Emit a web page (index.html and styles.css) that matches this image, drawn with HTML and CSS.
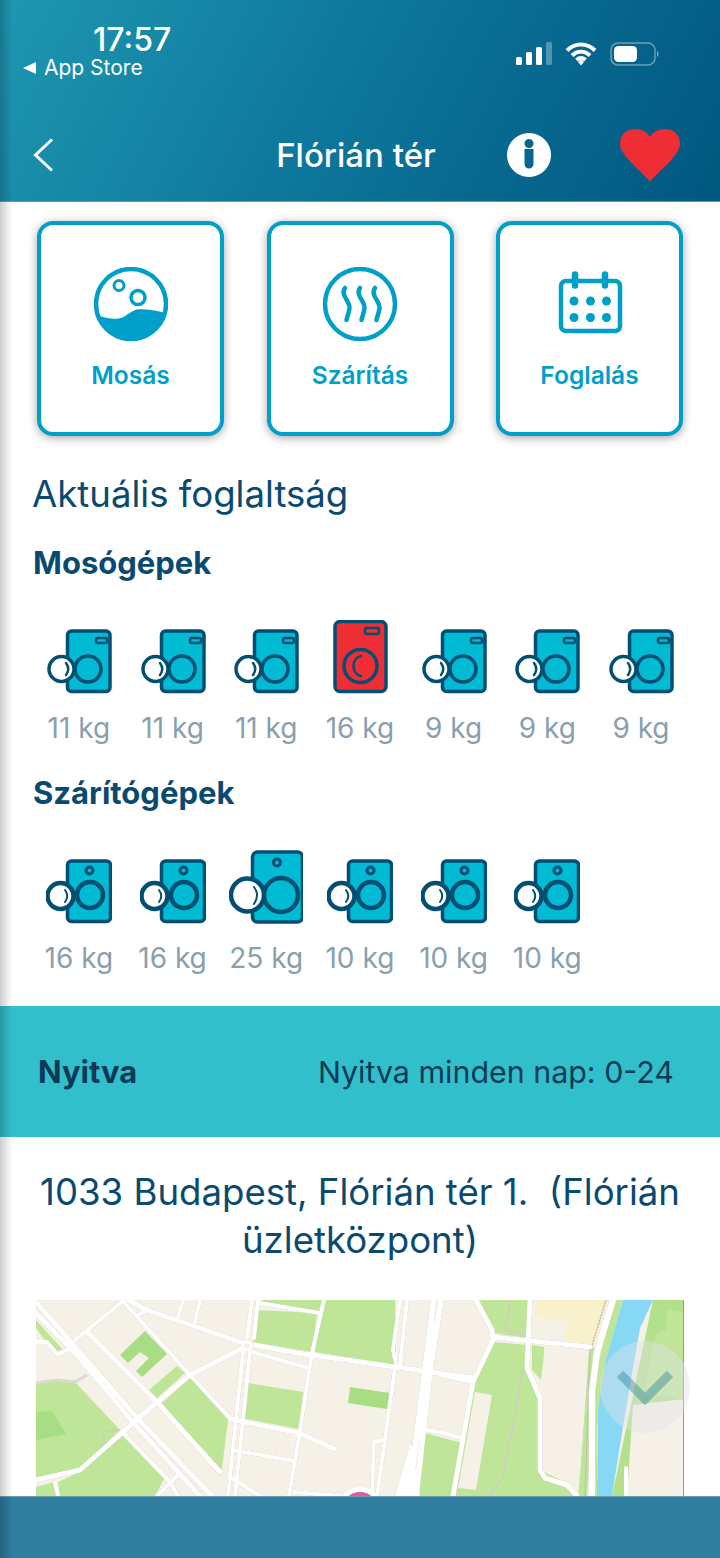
FILE: index.html
```html
<!DOCTYPE html>
<html lang="hu">
<head>
    <meta charset="UTF-8">
    <title>Flórián tér</title>
    <link rel="stylesheet" href="styles.css">
</head>
<body>
<svg class="defs" width="0" height="0">
    <symbol id="washer" viewBox="0 0 66 74">
        <rect x="21.5" y="11" width="42.5" height="60.5" rx="4" fill="#00bbd3" stroke="#034f73" stroke-width="3.5"/>
        <rect x="50" y="18" width="11" height="5" rx="2" fill="none" stroke="#034f73" stroke-width="2.5"/>
        <circle cx="42" cy="49" r="13" fill="#00bbd3" stroke="#034f73" stroke-width="3.5"/>
        <circle cx="15.5" cy="49" r="12.5" fill="#fff" stroke="#034f73" stroke-width="3.5"/>
        <path d="M20 43c3 4 3 8 0 12" fill="none" stroke="#034f73" stroke-width="2.5" stroke-linecap="round"/>
    </symbol>
    <symbol id="washer-busy" viewBox="0 0 66 74">
        <rect x="8" y="1.5" width="51" height="70" rx="5" fill="#ee2e34" stroke="#034f73" stroke-width="3.5"/>
        <rect x="38" y="8" width="14" height="6" rx="2" fill="none" stroke="#034f73" stroke-width="2.5"/>
        <circle cx="33.5" cy="46" r="16.5" fill="none" stroke="#034f73" stroke-width="3.5"/>
        <path d="M34 36c-10 2-10 18 0 20" fill="none" stroke="#034f73" stroke-width="2.5" stroke-linecap="round"/>
    </symbol>
    <symbol id="dryer" viewBox="0 0 66 74">
        <rect x="21.5" y="11" width="43" height="60.5" rx="4" fill="#00bbd3" stroke="#034f73" stroke-width="3.5"/>
        <circle cx="43.5" cy="20.5" r="3.5" fill="none" stroke="#034f73" stroke-width="3"/>
        <circle cx="44" cy="45" r="13" fill="#00bbd3" stroke="#034f73" stroke-width="4.5"/>
        <circle cx="14.5" cy="46" r="13" fill="#fff" stroke="#034f73" stroke-width="4.5"/>
        <path d="M19 40c3 4 3 8 0 12" fill="none" stroke="#034f73" stroke-width="2" stroke-linecap="round"/>
    </symbol>
    <symbol id="dryer-big" viewBox="0 0 74 74">
        <rect x="23.5" y="2" width="50" height="70" rx="5" fill="#00bbd3" stroke="#034f73" stroke-width="3.5"/>
        <circle cx="48" cy="12.5" r="3.5" fill="none" stroke="#034f73" stroke-width="3"/>
        <circle cx="52" cy="45" r="17" fill="#00bbd3" stroke="#034f73" stroke-width="4.5"/>
        <circle cx="18.5" cy="45" r="16.5" fill="#fff" stroke="#034f73" stroke-width="4.5"/>
        <path d="M25 37c4 5 4 11 0 17" fill="none" stroke="#034f73" stroke-width="2" stroke-linecap="round"/>
    </symbol>
</svg>

<div class="page">
    <header class="header">
        <div class="status">
            <div class="status-left">
                <div class="time">17:57</div>
                <div class="back-app"><span class="back-arrow"></span>App Store</div>
            </div>
            <div class="status-right">
                <svg width="36" height="24" viewBox="0 0 36 24"><rect x="0" y="15" width="6" height="8" rx="1.5" fill="#fff"/><rect x="10" y="10" width="6" height="13" rx="1.5" fill="#fff"/><rect x="20" y="5" width="6" height="18" rx="1.5" fill="#fff"/><rect x="30" y="0" width="6" height="23" rx="1.5" fill="#fff" opacity=".3"/></svg>
                <svg width="32" height="24" viewBox="0 0 32 24"><path d="M2 8.5c8-8 20-8 28 0M7 13.5c5.5-5 12.5-5 18 0M11.5 18c3-2.5 6-2.5 9 0" fill="none" stroke="#fff" stroke-width="4"/><path d="M13 20l3-2.500 3 2.500-3 3.500z" fill="#fff"/></svg>
                <svg width="50" height="24" viewBox="0 0 50 24"><rect x="1" y="1" width="44" height="22" rx="7" fill="none" stroke="#fff" stroke-width="1.5" opacity=".4"/><rect x="4" y="4" width="23" height="16" rx="4.5" fill="#fff"/><path d="M47 9c2 .5 2 5.500 0 6z" fill="#fff" opacity=".45"/></svg>
            </div>
        </div>
        <div class="nav">
            <svg class="nav-back" width="20" height="34" viewBox="0 0 20 34"><path d="M19 1.500L2.500 17 19 32.500" fill="none" stroke="#fff" stroke-width="3"/></svg>
            <div class="nav-title">Flórián tér</div>
            <svg class="nav-info" width="44" height="44" viewBox="0 0 44 44"><path fill="#fff" fill-rule="evenodd" d="M22 0a22 22 0 1 0 0.010 0zM22 6a4.500 4.500 0 1 0 0.010 0zM17.500 16v15a4.500 4.500 0 0 0 9 0V16z"/></svg>
            <svg class="nav-heart" width="60" height="53" viewBox="0 0 60 53"><path fill="#ee2e34" d="M30 53C26 46 0 27 0 15 0 5 7 0 15 0c7 0 12 3 15 8 3-5 8-8 15-8 8 0 15 5 15 15 0 12-26 31-30 38z"/></svg>
        </div>
    </header>

    <section class="cards">
        <div class="card">
            <svg width="74" height="74" viewBox="0 0 74 74">
                <circle cx="37" cy="37" r="35" fill="none" stroke="#009fca" stroke-width="4.5"/>
                <path fill="#009fca" d="M3 47.500C12 52 22 53 28.300 50.500 34 48 39 42.300 45 42.300c9 0 19 1.500 26 3.700C68 62 54 74 37 74 20 74 6 62 3 47.500z"/>
                <circle cx="25" cy="18.5" r="5" fill="none" stroke="#009fca" stroke-width="3"/>
                <circle cx="44" cy="30.5" r="7" fill="none" stroke="#009fca" stroke-width="3.5"/>
            </svg>
            <div class="card-label">Mosás</div>
        </div>
        <div class="card">
            <svg width="74" height="74" viewBox="0 0 74 74">
                <circle cx="37" cy="37" r="35" fill="none" stroke="#009fca" stroke-width="4.5"/>
                <g fill="none" stroke="#009fca" stroke-width="4.5" stroke-linecap="round">
                    <path d="M22 21C17 28 27 34 26.500 41 26 46 24 50 23.500 53"/>
                    <path d="M37 21C32 28 42 34 41.500 41 41 46 39 50 38.500 53"/>
                    <path d="M52 21C47 28 57 34 56.500 41 56 46 54 50 53.500 53"/>
                </g>
            </svg>
            <div class="card-label">Szárítás</div>
        </div>
        <div class="card">
            <svg width="74" height="74" viewBox="0 0 74 74">
                <rect x="8" y="14" width="59" height="50" rx="5" fill="none" stroke="#009fca" stroke-width="4.5"/>
                <path d="M22 7.500v11M52 7.500v11" stroke="#009fca" stroke-width="6.5" stroke-linecap="round"/>
                <g fill="#009fca">
                    <circle cx="21" cy="34" r="4.5"/><circle cx="37.5" cy="34" r="4.5"/><circle cx="53.5" cy="34" r="4.5"/>
                    <circle cx="21" cy="50.5" r="4.5"/><circle cx="37.5" cy="50.5" r="4.5"/><circle cx="53.5" cy="50.5" r="4.5"/>
                </g>
            </svg>
            <div class="card-label">Foglalás</div>
        </div>
    </section>

    <h1 class="title">Aktuális foglaltság</h1>

    <h2 class="subtitle">Mosógépek</h2>
    <div class="machines">
        <div class="machine"><svg width="66" height="74"><use href="#washer"/></svg><span>11 kg</span></div>
        <div class="machine"><svg width="66" height="74"><use href="#washer"/></svg><span>11 kg</span></div>
        <div class="machine"><svg width="66" height="74"><use href="#washer"/></svg><span>11 kg</span></div>
        <div class="machine"><svg width="66" height="74"><use href="#washer-busy"/></svg><span>16 kg</span></div>
        <div class="machine"><svg width="66" height="74"><use href="#washer"/></svg><span>9 kg</span></div>
        <div class="machine"><svg width="66" height="74"><use href="#washer"/></svg><span>9 kg</span></div>
        <div class="machine"><svg width="66" height="74"><use href="#washer"/></svg><span>9 kg</span></div>
    </div>

    <h2 class="subtitle subtitle-dry">Szárítógépek</h2>
    <div class="machines">
        <div class="machine"><svg width="66" height="74"><use href="#dryer"/></svg><span>16 kg</span></div>
        <div class="machine"><svg width="66" height="74"><use href="#dryer"/></svg><span>16 kg</span></div>
        <div class="machine"><svg width="74" height="74"><use href="#dryer-big"/></svg><span>25 kg</span></div>
        <div class="machine"><svg width="66" height="74"><use href="#dryer"/></svg><span>10 kg</span></div>
        <div class="machine"><svg width="66" height="74"><use href="#dryer"/></svg><span>10 kg</span></div>
        <div class="machine"><svg width="66" height="74"><use href="#dryer"/></svg><span>10 kg</span></div>
    </div>

    <div class="open-bar">
        <div class="open-label">Nyitva</div>
        <div class="open-hours">Nyitva minden nap: 0-24</div>
    </div>

    <div class="address">1033 Budapest, Flórián tér 1.&nbsp; (Flórián üzletközpont)</div>

    <div class="map">
        <svg width="648" height="196" viewBox="0 0 648 196">
            <rect width="648" height="196" fill="#f5f1e6"/>
            <!-- parks -->
            <g fill="#bfe599">
                <path d="M0 83L22 80 39 82 84 130 44 170 0 180z"/>
                <path d="M87 135L129 177 119 196H24L22 182 44 172z"/>
                <path d="M0 187L19 182 21 196H0z"/>
                <path d="M0 20L27 50 21 53 11 43 0 28z"/>
                <path d="M126 103L154 78 192 120 185 176 180 172z"/>
                <path d="M113 90L141 66 149 73 121 98z"/>
                <path d="M219 10L281 13 276 52 217 42z"/>
                <path d="M226 0H286L283 11 225 5z"/>
                <path d="M286 0H359L360 65 279 52z"/>
                <path d="M212 83L267 92 263 129 205 118z"/>
                <path d="M457 42L491 45 489 68 504 95V170L531 183 542 196H416L437 82z"/>
                <path d="M439 0H494L492 38 457 33z"/>
                <path d="M496 45L509 47 505 80 496 70z"/>
                <path d="M389 133L426 143 416 196H373z"/>
                <path d="M553 48H561L551 196H542L544 173z"/>
                <path d="M577 0H587L569 62 561 128V196H553L556 92z"/>
            </g>
            <path fill="#b3e08d" d="M617 0H648V196H576z"/>
            <path fill="#bfe599" d="M631 10L648 12V98L609 95 611 78 619 35 630 30z"/>
            <g fill="#a8dd83">
                <path d="M109 31L131 54 106 77 100 71 113 58 104 52 92 63 84 55z"/>
                <path d="M0 112L16 111 30 134 0 140z"/>
                <path d="M314 87L354 93 351 109 312 103z"/>
            </g>
            <!-- buildings and water -->
            <path fill="#f5f1e6" d="M439 92L456 95 440 190 422 188z"/>
            <path fill="#f5f1e6" d="M508 47L553 48 544 173 507 170z"/>
            <path fill="#f5f1e6" d="M597 105L648 99V196H591z"/>
            <path fill="#f8f1cc" d="M499 0H571L559 45 529 40 531 20 499 17z"/>
            <path fill="#87d8f5" d="M587 0H617L604 28 594 85 584 145 576 196H561L562 112 569 62z"/>
            <!-- thin paths -->
            <g fill="none" stroke="#cfcdc0" stroke-width="1.5">
                <path d="M475 0L469 30 484 33V37M487 70L467 177 454 196"/>
                <path d="M67 132L84 130M67 132L69 145"/>
                <path d="M570 0L554 52 549 196" stroke="#bdbbae" stroke-dasharray="2 1"/>
                <path d="M0 83L22 80 39 82 51 75" stroke="#ddd9cd" stroke-width="3"/>
                <path d="M20 30L101 125 165 195" stroke="#cfcfc4" stroke-width="3"/>
            </g>
            <!-- roads -->
            <g class="roads" fill="none" stroke="#fff" stroke-linejoin="round" stroke-linecap="round">
                <g stroke-width="5">
                    <path d="M0 2L101 118 176 196"/>
                    <path d="M0 13L39 53 97 122 164 196"/>
                    <path d="M52 33L121 102 184 172"/>
                    <path d="M92 0L111 10 207 43"/>
                    <path d="M219 45L254 52 359 67 437 78"/>
                    <path d="M207 48L154 75 121 102 97 123 44 170 0 180"/>
                    <path d="M194 119L263 133 299 149"/>
                    <path d="M440 0L456 30 457 40 437 82 417 196"/>
                    <path d="M457 37L554 47"/>
                    <path d="M494 0L491 68 504 98V170L509 178 531 185 541 196"/>
                </g>
                <g stroke-width="4">
                    <path d="M86 0L154 75 194 118"/>
                    <path d="M86 2L39 40"/>
                    <path d="M102 15L111 10"/>
                    <path d="M147 0L142 17M164 0L159 22"/>
                    <path d="M216 0L211 38M222 0L218 38"/>
                    <path d="M207 52L192 196M214 52L199 196"/>
                    <path d="M224 3L283 13"/>
                    <path d="M216 52L272 68"/>
                    <path d="M197 150L258 161"/>
                    <path d="M196 178L224 196"/>
                    <path d="M87 133L134 182 142 196"/>
                    <path d="M144 173L121 196"/>
                    <path d="M0 42H11L21 54 32 50"/>
                    <path d="M19 183L22 196"/>
                    <path d="M288 0L276 53 263 137 253 196"/>
                    <path d="M359 67L341 196"/>
                    <path d="M336 196L338 142 347 140"/>
                    <path d="M364 0L357 50 360 63M371 0L364 65"/>
                    <path d="M404 75L437 82M404 132L426 138M391 130L404 132"/>
                    <path d="M258 192L304 196"/>
                    <path d="M590 168V196"/>
                </g>
                <path stroke-width="6" d="M398 0L389 70 373 196M405 0L394 70 380 196"/>
                <path stroke-width="6.5" d="M577 0L561 52 556 92V196"/>
                <path stroke="none" fill="#fff" d="M359 196L375 140 384 196z"/>
            </g>
            <circle cx="211" cy="46" r="4" fill="#f5f1e6" stroke="#fff" stroke-width="2.5"/>
            <line x1="647.5" y1="0" x2="647.5" y2="196" stroke="#8aa87a"/>
            <circle cx="324" cy="209" r="22" fill="#fff"/>
            <circle cx="324" cy="210" r="18" fill="#f0569a"/>
        </svg>
        <div class="scroll-btn">
            <svg width="56" height="36" viewBox="0 0 56 36"><path d="M3 5l25 25 25-25" fill="none" stroke="#0a6f8f" stroke-width="9" opacity=".35"/></svg>
        </div>
    </div>

    <div class="tabbar"></div>
    <div class="edge-shade"></div>
</div>
</body>
</html>
```

FILE: styles.css
```css
*{
    margin: 0;
    padding: 0;
    box-sizing: border-box;
}
html,body{
    width: 720px;
    height: 1558px;
    overflow: hidden;
    background: #fff;
}
body{
    font-family: Inter, "Liberation Sans", sans-serif;
    color: #0a4a70;
}
.defs{
    position: absolute;
}
.page{
    position: relative;
    width: 720px;
    height: 1558px;
    overflow: hidden;
}
.header{
    height: 202px;
    color: #fff;
    background: linear-gradient(118deg, #1e97b1 0%, #0c7399 52%, #00577f 100%);
    border-bottom: 1px solid #4aa3c0;
}
.status{
    display: flex;
    justify-content: space-between;
    height: 128px;
    padding: 24px 60px 0 23px;
}
.time{
    margin-left: 70px;
    font-size: 32px;
    line-height: 32px;
    font-weight: 500;
}
.back-app{
    display: flex;
    align-items: center;
    font-size: 21px;
    line-height: 24px;
}
.back-arrow{
    width: 0;
    height: 0;
    margin-right: 8px;
    border-top: 6px solid transparent;
    border-bottom: 6px solid transparent;
    border-right: 13px solid #fff;
}
.status-right{
    display: flex;
    align-items: flex-start;
    gap: 13px;
    padding-top: 18px;
}
.nav{
    display: flex;
    align-items: center;
    height: 54px;
    padding-left: 33px;
}
.nav-title{
    width: 200px;
    margin-left: 203px;
    text-align: center;
    font-size: 33px;
    font-weight: 500;
}
.nav-info{
    margin-left: 51px;
}
.nav-heart{
    margin-left: 69px;
}
.cards{
    display: flex;
    gap: 42.5px;
    padding: 19px 0 0 37px;
}
.card{
    display: flex;
    flex-direction: column;
    align-items: center;
    width: 187px;
    height: 215px;
    padding-top: 42px;
    background: #fff;
    border: 4px solid #009fca;
    border-radius: 16px;
    box-shadow: 0 2px 10px rgba(0,0,0,.35);
}
.card-label{
    margin-top: 19px;
    font-size: 24.5px;
    line-height: 30px;
    font-weight: 600;
    color: #009fca;
}
.title{
    margin: 35px 0 0 32px;
    font-size: 36.6px;
    line-height: 46px;
    font-weight: 400;
}
.subtitle{
    margin: 27px 0 0 33px;
    font-size: 31px;
    line-height: 38px;
    font-weight: 700;
}
.subtitle-dry{
    margin-top: 29px;
}
.machines{
    display: flex;
    margin-top: 38px;
    padding-left: 32px;
}
.machine{
    display: flex;
    flex-direction: column;
    align-items: center;
    width: 93.7px;
}
.machine span{
    margin-top: 17px;
    font-size: 28px;
    line-height: 34px;
    color: #8a9fae;
}
.open-bar{
    display: flex;
    justify-content: space-between;
    align-items: center;
    height: 131px;
    margin-top: 31px;
    padding: 0 46px 0 38px;
    background: #31bfcc;
    color: #0b3a57;
    font-size: 31px;
}
.open-label{
    font-weight: 700;
}
.open-hours{
    font-size: 30.4px;
}
.address{
    margin-top: 31px;
    padding: 0 30px;
    text-align: center;
    font-size: 36.6px;
    line-height: 48px;
}
.map{
    position: relative;
    width: 648px;
    height: 196px;
    margin: 36px 0 0 36px;
}
.map svg{
    display: block;
}
.roads{
    filter: drop-shadow(0 0 .6px #b5b2a6);
}
.scroll-btn{
    position: absolute;
    left: 564px;
    top: 41px;
    display: flex;
    align-items: center;
    justify-content: center;
    width: 90px;
    height: 92px;
    border-radius: 50%;
    background: rgba(226,226,234,.42);
}
.tabbar{
    height: 62px;
    background: #2f7c9e;
    border-top: 1px solid #6d9fb5;
}
.edge-shade{
    position: absolute;
    left: 0;
    top: 0;
    bottom: 0;
    width: 12px;
    background: linear-gradient(90deg, rgba(0,0,0,.2), rgba(0,0,0,0));
    pointer-events: none;
}
```
